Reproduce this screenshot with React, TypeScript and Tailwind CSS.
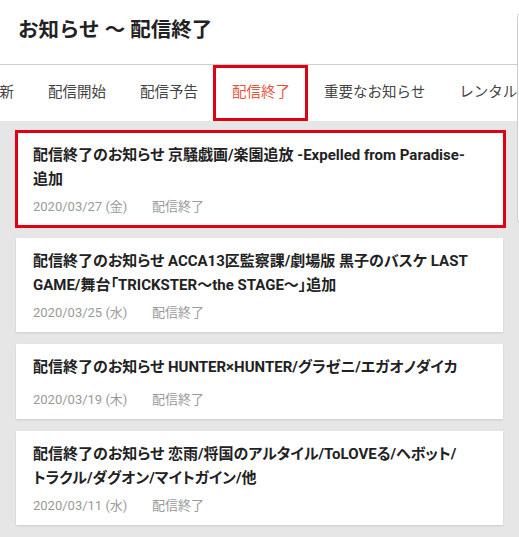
import React from 'react';

const tabs = ['最新', '配信開始', '配信予告', '配信終了', '重要なお知らせ', 'レンタル'];

const news = [
  {
    lines: ['配信終了のお知らせ 京騒戯画/楽園追放 -Expelled from Paradise-', '追加'],
    date: '2020/03/27 (金)',
    marked: true,
  },
  {
    lines: ['配信終了のお知らせ ACCA13区監察課/劇場版 黒子のバスケ LAST', 'GAME/舞台「TRICKSTER～the STAGE～」追加'],
    date: '2020/03/25 (水)',
  },
  {
    lines: ['配信終了のお知らせ HUNTER×HUNTER/グラゼニ/エガオノダイカ'],
    date: '2020/03/19 (木)',
  },
  {
    lines: ['配信終了のお知らせ 恋雨/将国のアルタイル/ToLOVEる/ヘボット/', 'トラクル/ダグオン/マイトガイン/他'],
    date: '2020/03/11 (水)',
  },
];

export default function App() {
  return (
    <div
      className="relative w-[519px] h-[537px] overflow-hidden bg-[#e6e6e6]"
      style={{ fontFamily: 'Roboto, "Noto Sans CJK JP", sans-serif' }}
    >
      {/* header */}
      <header className="h-[65px] bg-white border-b border-[#cfcfcf] flex items-center pl-[18px] pb-[4px]">
        <h1 className="text-[20.5px] font-bold text-[#222]">お知らせ ～ 配信終了</h1>
      </header>

      {/* tab bar */}
      <nav className="h-[56px] bg-white overflow-hidden">
        <div className="flex h-full -ml-[32px] whitespace-nowrap">
          {tabs.map((tab) => {
            const active = tab === '配信終了';
            return (
              <div
                key={tab}
                className={`relative flex items-center px-[17px] h-full text-[14.5px] ${
                  active ? 'text-[#e8553e]' : 'text-[#444]'
                }`}
              >
                {tab}
                {active && (
                  <span className="absolute -left-[2px] -right-[1px] top-0 bottom-0 border-[3px] border-[#e00012]" />
                )}
              </div>
            );
          })}
        </div>
      </nav>

      {/* list */}
      <main className="flex flex-col gap-3 px-4 pt-[11px]">
        {news.map((item) => (
          <article
            key={item.date}
            className="relative bg-white shadow-[0_1px_2px_rgba(0,0,0,0.12)] pt-[11px] pb-[9px] px-[17px]"
          >
            <h2 className="min-h-[29px] text-[15px] leading-[24px] font-bold text-[#222] [font-feature-settings:'palt']">
              {item.lines.map((line) => (
                <span key={line} className="block whitespace-nowrap">
                  {line}
                </span>
              ))}
            </h2>
            <div className="mt-[6px] flex text-[13px] leading-[20px] text-[#9a9a9a]">
              <span className="w-[119px]">{item.date}</span>
              <span>配信終了</span>
            </div>
            {item.marked && (
              <span className="absolute -left-[1px] -right-[3px] -top-[2px] -bottom-[2px] border-[3px] border-[#e00012]" />
            )}
          </article>
        ))}
      </main>

      {/* edge of a panel peeking in from the right */}
      <div className="absolute left-[517px] top-[10px] h-[216px] w-[20px] rounded-l-lg border border-[#cccccc] bg-white" />
    </div>
  );
}
